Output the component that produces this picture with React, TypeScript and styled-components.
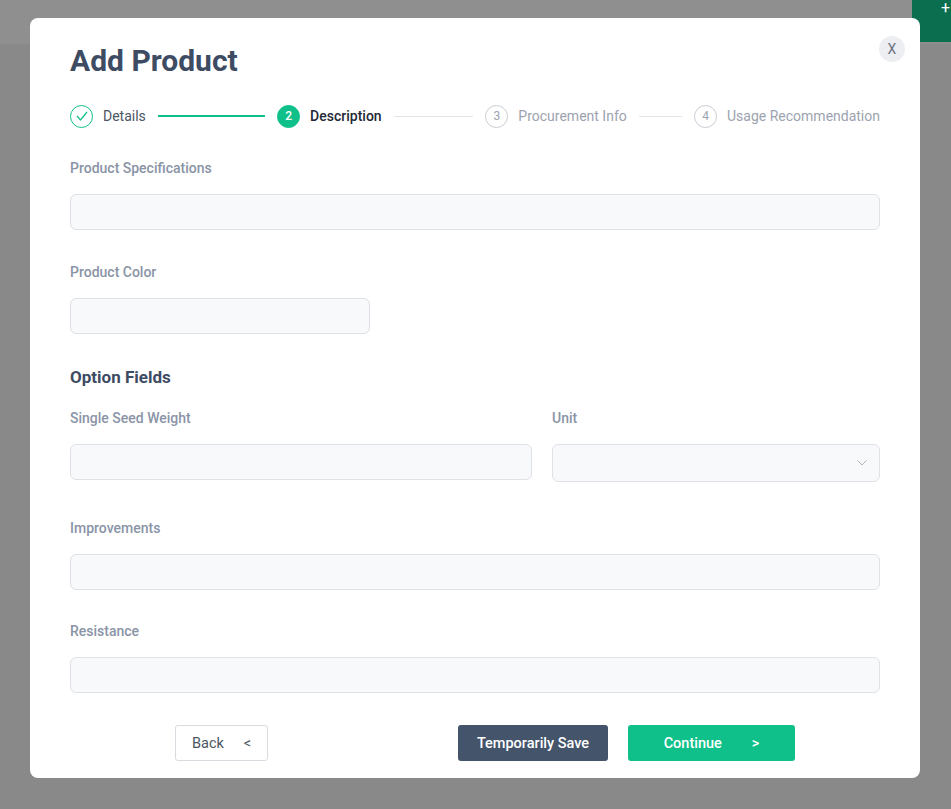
import React from "react";
import styled, { createGlobalStyle } from "styled-components";

const G = createGlobalStyle`
  html,body{margin:0;padding:0;}
  body{font-family:Roboto,"Liberation Sans",sans-serif;background:#898989;}
`;
const Page = styled.div`position:relative;width:951px;height:809px;background:#898989;overflow:hidden;`;
const TopBar = styled.div`position:absolute;left:0;top:0;right:0;height:44px;background:#8f8f8f;`;
const Corner = styled.div`position:absolute;right:0;top:0;width:39px;height:42px;background:#0b6e4f;color:#fff;font-size:16px;padding-left:29px;box-sizing:border-box;line-height:16px;overflow:hidden;`;
const Modal = styled.div`
  position:absolute;left:30px;top:18px;width:890px;height:760px;background:#fff;border-radius:8px;
  box-sizing:border-box;padding:24px 40px 0 40px;display:flex;flex-direction:column;
`;
const Close = styled.div`position:absolute;right:15px;top:18px;width:26px;height:26px;border-radius:50%;background:#eceef1;color:#6b7280;font-size:14px;display:flex;align-items:center;justify-content:center;`;
const Title = styled.h1`margin:0;font-size:30px;font-weight:700;color:#3e4c63;line-height:38px;`;
const Steps = styled.div`display:flex;align-items:center;margin-top:23px;height:26px;`;
const Step = styled.div`display:flex;align-items:center;gap:10px;font-size:14px;white-space:nowrap;color:${p=>p.$c};font-weight:${p=>p.$b?500:400};`;
const Dot = styled.div`width:23px;height:23px;border-radius:50%;box-sizing:border-box;display:flex;align-items:center;justify-content:center;font-size:12px;
  border:1px solid ${p=>p.$bd};background:${p=>p.$bg};color:${p=>p.$fg};`;
const Line = styled.div`flex:${p=>p.$g} 1 0;height:${p=>p.$on?2:1}px;background:${p=>p.$on?"#10c08a":"#e2e4e8"};margin:0 12px;`;
const Label = styled.div`font-size:14px;font-weight:500;color:#8a94a6;line-height:20px;margin-top:${p=>p.$mt}px;`;
const Input = styled.div`margin-top:16px;height:${p=>p.$h||36}px;width:${p=>p.$w||"100%"};box-sizing:border-box;border:1px solid #dfe2e7;border-radius:6px;background:#f8f9fb;position:relative;`;
const Section = styled.div`font-size:17px;font-weight:700;color:#3e4c63;margin-top:32px;line-height:22px;`;
const Row = styled.div`display:grid;grid-template-columns:462px 1fr;gap:20px;`;
const Chev = styled.svg`position:absolute;right:12px;top:15px;`;
const Footer = styled.div`display:flex;margin-top:32px;padding-left:105px;`;
const Btn = styled.div`height:36px;box-sizing:border-box;border-radius:3px;display:flex;align-items:center;font-size:14.5px;width:${p=>p.$w}px;margin-left:${p=>p.$ml||0}px;
  background:${p=>p.$bg};color:${p=>p.$fg};border:${p=>p.$bd||"none"};font-weight:${p=>p.$b?500:400};padding:0 ${p=>p.$p}px;justify-content:${p=>p.$j};`;

export default function App(){
  return <Page><G/><TopBar/><Corner>+</Corner>
    <Modal>
      <Close>X</Close>
      <Title>Add Product</Title>
      <Steps>
        <Step $c="#4b5563"><Dot $bd="#10c08a" $bg="#fff" $fg="#10c08a"><svg width="12" height="10" viewBox="0 0 12 10"><path d="M1 5 L4.5 9 L11 1" fill="none" stroke="#10c08a" strokeWidth="1.2"/></svg></Dot>Details</Step>
        <Line $on $g={109}/>
        <Step $c="#1f2937" $b><Dot $bd="#10c08a" $bg="#10c08a" $fg="#fff">2</Dot>Description</Step>
        <Line $g={81}/>
        <Step $c="#9ca3af"><Dot $bd="#c9cdd3" $bg="#fff" $fg="#9ca3af">3</Dot>Procurement Info</Step>
        <Line $g={44}/>
        <Step $c="#9ca3af"><Dot $bd="#c9cdd3" $bg="#fff" $fg="#9ca3af">4</Dot>Usage Recommendation</Step>
      </Steps>
      <Label $mt={29}>Product Specifications</Label>
      <Input/>
      <Label $mt={32}>Product Color</Label>
      <Input $w="300px"/>
      <Section>Option Fields</Section>
      <Row>
        <div><Label $mt={20}>Single Seed Weight</Label><Input/></div>
        <div><Label $mt={20}>Unit</Label><Input $h={38}><Chev width="10" height="6" viewBox="0 0 10 6"><path d="M0.5 0.5 L5 5 L9.5 0.5" fill="none" stroke="#b0b5bd"/></Chev></Input></div>
      </Row>
      <Label $mt={36}>Improvements</Label>
      <Input/>
      <Label $mt={31}>Resistance</Label>
      <Input/>
      <Footer>
        <Btn $w={93} $bg="#fff" $fg="#4b5563" $bd="1px solid #d8dbe0" $p={16} $j="space-between">Back<span>&lt;</span></Btn>
        <Btn $w={150} $ml={190} $bg="#44546b" $fg="#fff" $b $p={0} $j="center">Temporarily Save</Btn>
        <Btn $w={167} $ml={20} $bg="#10c08a" $fg="#fff" $b $p={0} $j="center"><span>Continue</span><span style={{marginLeft:30}}>&gt;</span></Btn>
      </Footer>
    </Modal>
  </Page>;
}
